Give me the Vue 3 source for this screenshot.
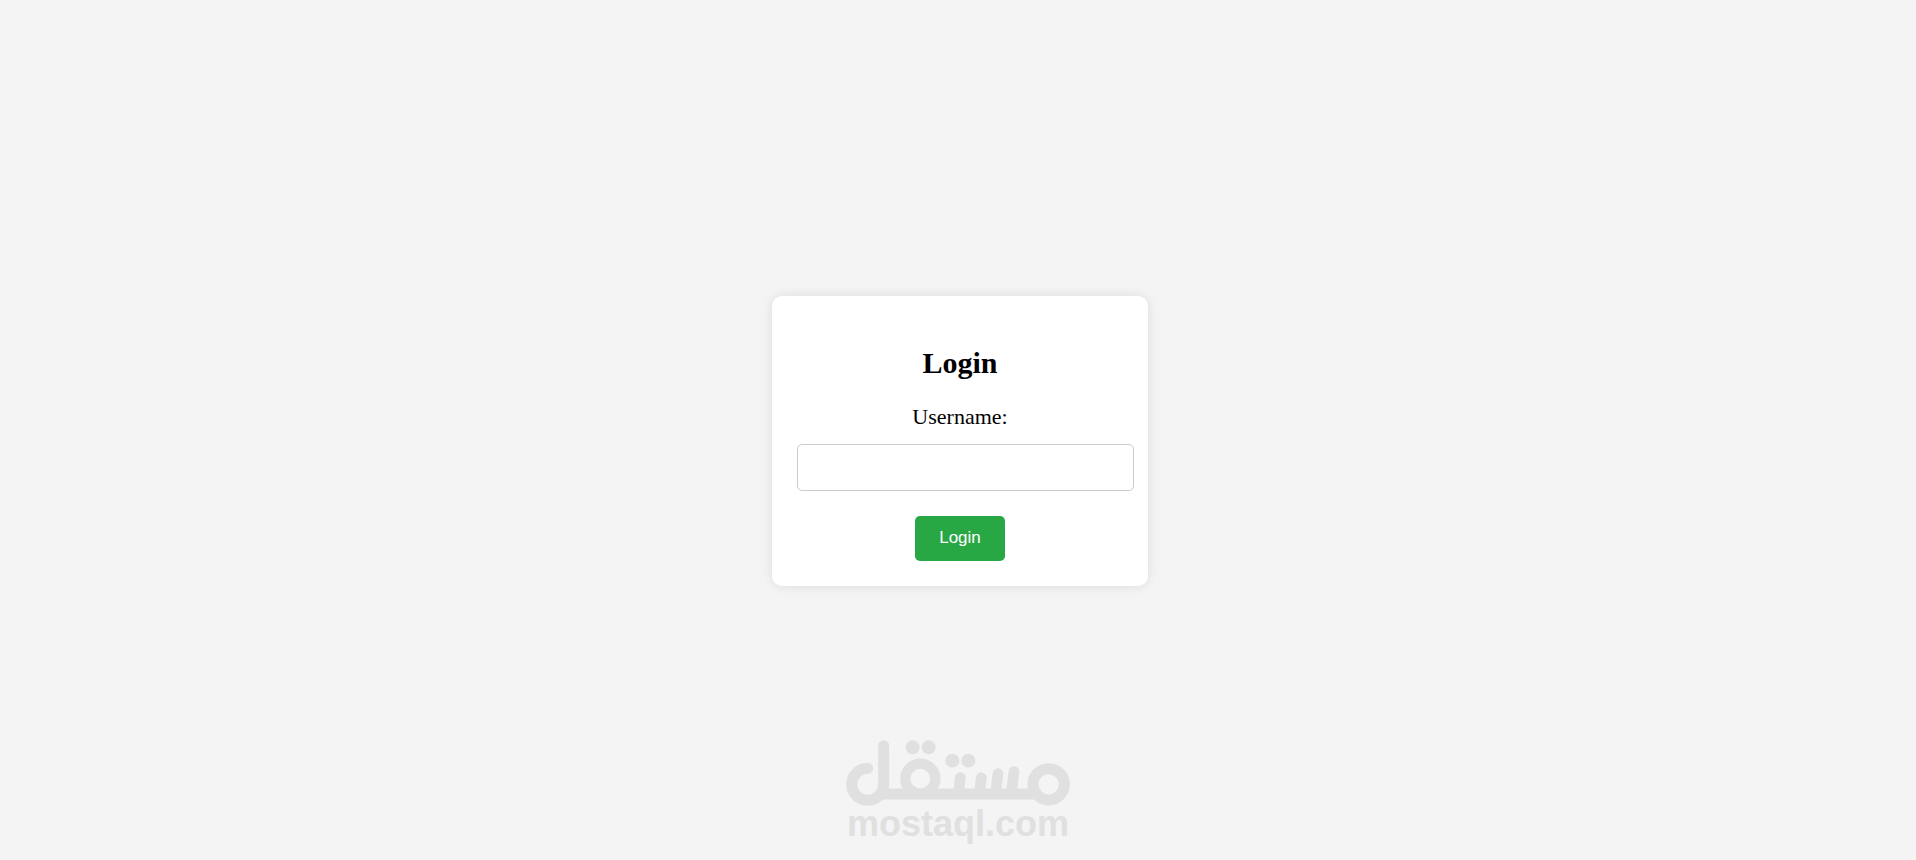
<script setup>
import { ref } from 'vue'

const username = ref('')
const dots = [
  { x: 230, y: 51 },
  { x: 278, y: 51 },
  { x: 349, y: 91 },
  { x: 397, y: 91 },
]
</script>

<template>
  <main class="page">
    <form class="card" @submit.prevent>
      <h2 class="title">Login</h2>
      <label class="label" for="username">Username:</label>
      <input id="username" v-model="username" class="field" type="text" name="username" />
      <button class="submit" type="submit">Login</button>
    </form>

    <div class="watermark">
      <svg class="mark" viewBox="30 29 672 198" aria-hidden="true">
        <g fill="none" stroke="currentColor" stroke-width="33">
          <path d="M95 114A48 48 0 1 0 143 162V46" stroke-linecap="round" />
          <path d="M130 191H600" />
          <circle cx="253" cy="145" r="45" stroke-width="31" />
          <circle cx="638" cy="162" r="47" />
          <path
            d="M373 142L368 188M436 142L430 188M486 130L479 188M534 124L526 188"
            stroke-width="32"
            stroke-linecap="round"
          />
        </g>
        <circle v-for="dot in dots" :key="dot.x" :cx="dot.x" :cy="dot.y" r="21" fill="currentColor" />
      </svg>
      <span class="domain">mostaql.com</span>
    </div>
  </main>
</template>

<style>
body {
  margin: 0;
  background: #f4f4f4;
}
</style>

<style scoped>
.page {
  box-sizing: border-box;
  position: relative;
  display: flex;
  align-items: center;
  justify-content: center;
  min-height: 100vh;
  padding: 22px 0 0 4px;
  background: #f4f4f4;
  font-family: "Liberation Serif", "Times New Roman", serif;
  color: #000;
}

.card {
  box-sizing: border-box;
  width: 376px;
  max-width: 100%;
  padding: 25px;
  border-radius: 10px;
  background: #fff;
  box-shadow: 0 0 12px rgba(0, 0, 0, 0.1);
  text-align: center;
}

.title {
  margin: 25px 0;
  font-size: 30px;
  line-height: 34px;
  font-weight: 700;
}

.label {
  display: block;
  margin-bottom: 16px;
  font-size: 22px;
  line-height: 23px;
}

.field {
  box-sizing: border-box;
  display: block;
  width: calc(100% + 11px);
  height: 47px;
  margin: 0 0 25px;
  padding: 12px;
  border: 1px solid #ccc;
  border-radius: 5px;
  background: #fff;
  font-family: "Liberation Sans", Arial, sans-serif;
  font-size: 17px;
  outline: none;
}

.submit {
  display: block;
  margin: 0 auto;
  padding: 12px 24px 14px;
  border: none;
  border-radius: 5px;
  background: #28a745;
  color: #fff;
  font-family: "Liberation Sans", Arial, sans-serif;
  font-size: 17px;
  line-height: 19px;
  cursor: pointer;
}

.watermark {
  position: absolute;
  right: 0;
  bottom: 18px;
  left: 0;
  display: flex;
  flex-direction: column;
  align-items: center;
  color: #e0e0e0;
  pointer-events: none;
}

.mark {
  display: block;
  width: 224px;
  height: 66px;
}

.domain {
  font-family: "Liberation Sans", Arial, sans-serif;
  font-size: 36px;
  line-height: 36px;
  font-weight: 700;
}
</style>
